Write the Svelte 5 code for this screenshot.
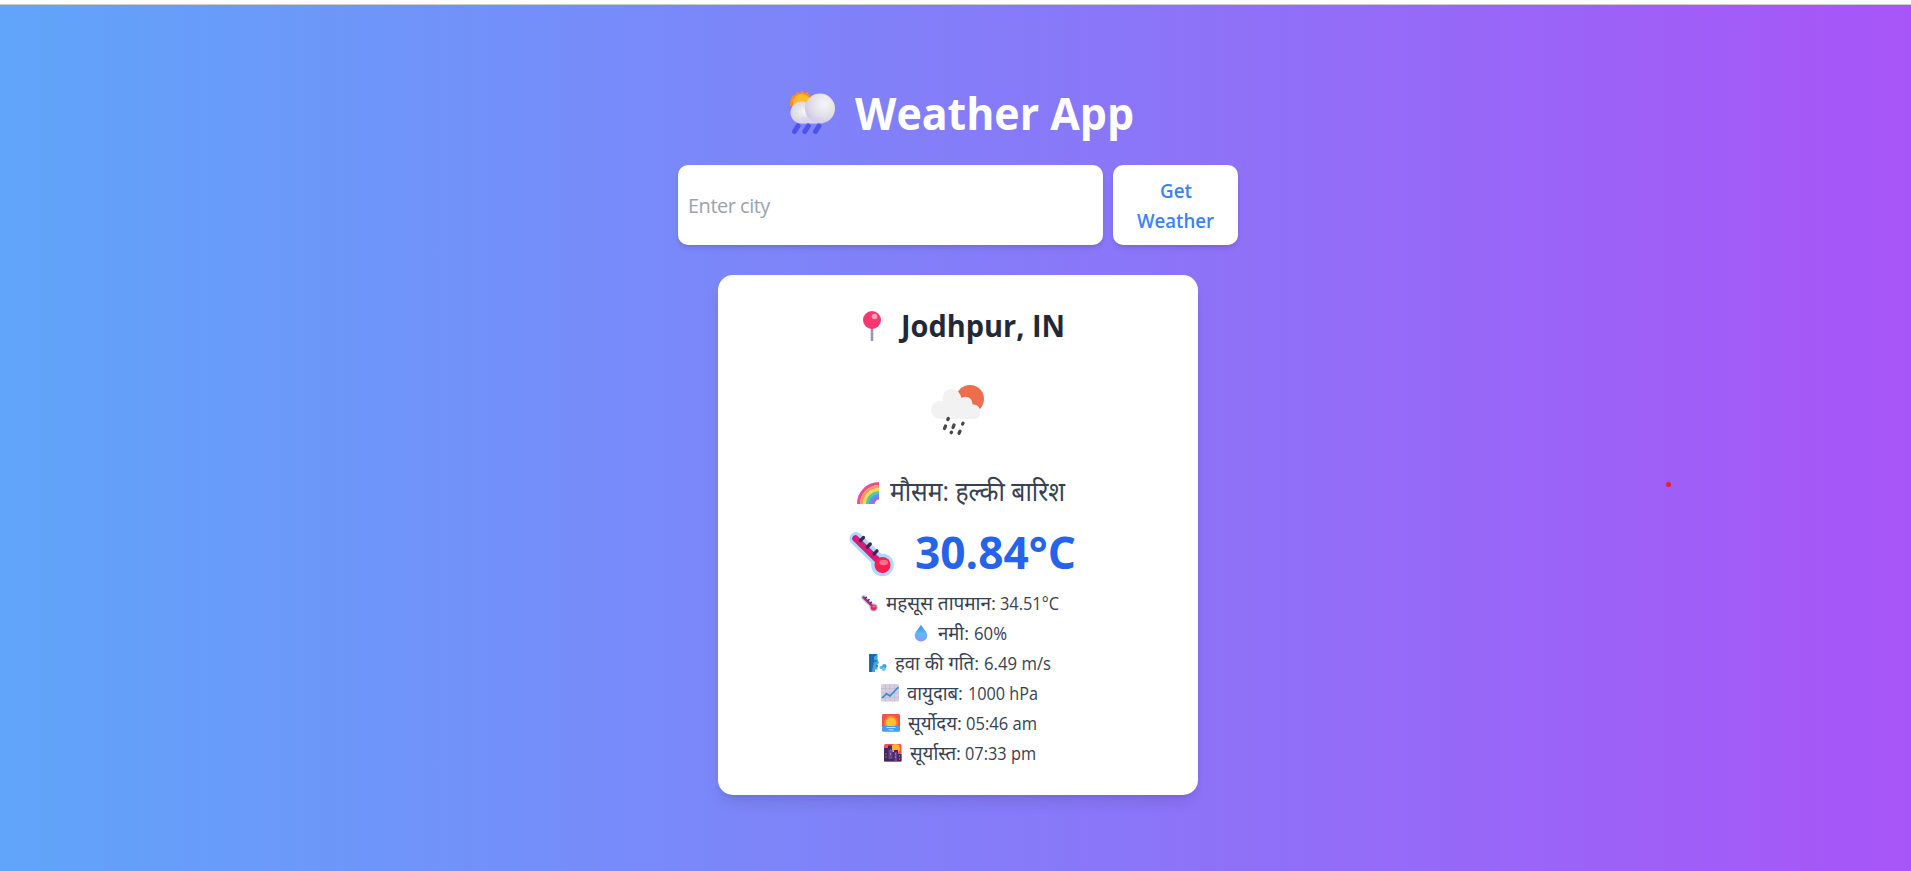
<script>
  let city = $state('');

  const details = [
    { icon: 'thermo', label: 'महसूस तापमान:', value: '34.51°C', lw: 110, vw: 59, gap: 4 },
    { icon: 'drop', label: 'नमी:', value: '60%', lw: 31, vw: 33, gap: 5 },
    { icon: 'wind', label: 'हवा की गति:', value: '6.49 m/s', lw: 84, vw: 67, gap: 5 },
    { icon: 'chart', label: 'वायुदाब:', value: '1000 hPa', lw: 56, vw: 70, gap: 5 },
    { icon: 'sunrise', label: 'सूर्योदय:', value: '05:46 am', lw: 54, vw: 71, gap: 4 },
    { icon: 'sunset', label: 'सूर्यास्त:', value: '07:33 pm', lw: 51, vw: 71, gap: 4 },
  ];

  // Condenses or widens a run of text to the given width.
  function fit(node, width) {
    const inner = node.firstElementChild;
    const natural = inner.getBoundingClientRect().width;
    node.style.width = width + 'px';
    if (natural) inner.style.transform = `scaleX(${width / natural})`;
  }
</script>

{#snippet run(text, width)}
  <span class="fit" use:fit={width}><span class="inner">{text}</span></span>
{/snippet}

{#snippet thermo(size)}
  <svg width={size} height={size} viewBox="0 0 45 45">
    <path d="M7 6.5 28 27" stroke="#add8ff" stroke-width="13" stroke-linecap="round" />
    <circle cx="33.5" cy="33" r="11.3" fill="#add8ff" />
    <path d="M6.5 6.5 30 29.5" stroke="#d51c78" stroke-width="6.5" stroke-linecap="round" />
    <circle cx="33.5" cy="33" r="8" fill="#fb1e50" />
    <ellipse cx="34.5" cy="30.5" rx="4.5" ry="2.7" fill="#ff718b" />
    <path d="m11.5 8.5 3-3M18.3 15l3-3M25 21.800l3-3" stroke="#382850" stroke-width="3.2" stroke-linecap="round" />
  </svg>
{/snippet}

<div class="page">
  <main>
    <h1>
      <span class="emoji">
        <svg width="45" height="45" viewBox="0 0 45 45">
          <defs>
            <radialGradient id="cloudA" cx=".65" cy=".35" r=".7"><stop offset="0" stop-color="#f5f5f6" /><stop offset=".6" stop-color="#e2e0e7" /><stop offset="1" stop-color="#cfc5e8" /></radialGradient>
            <radialGradient id="cloudB" cx=".5" cy=".45" r=".65"><stop offset="0" stop-color="#f7f6f8" /><stop offset=".6" stop-color="#dedce5" /><stop offset="1" stop-color="#d6c9f4" /></radialGradient>
          </defs>
          <path d="m0 11 1-3 1-3 3-1 2-3 3 1 2-2 3 2 3-1 1 3 2 1v10H0z" fill="#ff8b25" />
          <circle cx="12" cy="12" r="9" fill="#ffbd2e" />
          <path d="M11 32.500a11 11 0 1 1 5-21h13v21z" fill="url(#cloudB)" />
          <circle cx="30" cy="17.500" r="15" fill="url(#cloudA)" />
          <path d="M11 26h22v6.500H11z" fill="#dacff2" opacity=".5" />
          <path d="m8 35-3.500 5.500M18.300 35l-3.500 5.500M29 35l-3.500 5.500" stroke="#4b52ee" stroke-width="5" stroke-linecap="round" />
        </svg>
      </span>
      {@render run('Weather App', 279)}
    </h1>

    <div class="search">
      <input type="text" placeholder="Enter city" bind:value={city} />
      <button type="button">
        {@render run('Get', 32)}
        {@render run('Weather', 77)}
      </button>
    </div>

    <section class="card">
      <h2>
        <span class="emoji">
          <svg width="20" height="32" viewBox="0 0 20 32">
            <path d="M10 17v14" stroke="#a394ad" stroke-width="2.600" />
            <circle cx="10" cy="10" r="9" fill="#f7376f" />
            <circle cx="12.500" cy="6.500" r="2.800" fill="#ffa3b6" />
          </svg>
        </span>
        {@render run('Jodhpur, IN', 164)}
      </h2>

      <div class="condition">
        <svg width="100" height="80" viewBox="0 0 100 80">
          <circle cx="60" cy="29" r="14" fill="#ec6e4c" />
          <path d="M31 49a9 9 0 1 1 2-17.500C31 15 49 16 51.500 28c5-3 11 0 11 6.500 4-.5 8 2.500 8 7.500s-3.500 7-7 7z" fill="#f2f2f2" />
          <path d="m38.300 48.500-.5 1M44 55l-1 2.500M35.500 56l-1 2.500M53 53.300l-.4.700M41.500 62.200l-.3.500M50 61.300l-1 2" stroke="#484848" stroke-width="3.300" stroke-linecap="round" />
        </svg>
      </div>

      <p class="summary">
        <span class="emoji">
          <svg width="22" height="22" viewBox="0 0 22 22" fill="none" stroke-width="3.200">
            <path d="M1.600 22A20.400 20.400 0 0 1 22 1.600" stroke="#f5479d" />
            <path d="M4.600 22A17.400 17.400 0 0 1 22 4.600" stroke="#ff9b55" />
            <path d="M7.600 22A14.400 14.400 0 0 1 22 7.600" stroke="#f8da5c" />
            <path d="M10.500 22A11.500 11.500 0 0 1 22 10.500" stroke="#58cc91" />
            <path d="M13.300 22A8.700 8.700 0 0 1 22 13.300" stroke="#4b9df5" />
            <path d="M16 22a6 6 0 0 1 6-6" stroke="#a465e8" />
          </svg>
        </span>
        {@render run('मौसम: हल्की बारिश', 175)}
      </p>

      <p class="temp">
        <span class="emoji">{@render thermo(45)}</span>
        {@render run('30.84°C', 161)}
      </p>

      <ul>
        {#each details as d}
          <li>
            <span class="emoji">
              {#if d.icon === 'thermo'}
                {@render thermo(17)}
              {:else if d.icon === 'drop'}
                <svg width="18" height="18" viewBox="0 0 18 18">
                  <defs><linearGradient id="drop" x2="0" y2="1"><stop stop-color="#368ed5" /><stop offset=".55" stop-color="#62b9f8" /><stop offset="1" stop-color="#8298ff" /></linearGradient></defs>
                  <path d="M9 .5c-1 3-6.300 7-6.300 11a6.300 6 0 0 0 12.600 0c0-4-5.300-8-6.300-11z" fill="url(#drop)" />
                </svg>
              {:else if d.icon === 'wind'}
                <svg width="18" height="18" viewBox="0 0 18 18">
                  <path d="M0 0h8.500v5l1.500 4-1.500 1v5.500H6V18H0z" fill="#3ba9e7" />
                  <path d="M0 0h8.500L5 3v5l-1 4-1 6H0z" fill="#176cb0" />
                  <path d="M5 7h2.500M7 12h2" stroke="#174d83" stroke-width="1.200" />
                  <circle cx="12.300" cy="13.500" r="1.700" fill="#55bfe9" /><circle cx="15.300" cy="12.300" r="2.200" fill="#3aa6dc" /><circle cx="14.800" cy="15" r="2" fill="#69c8ef" />
                </svg>
              {:else if d.icon === 'chart'}
                <svg width="18" height="18" viewBox="0 0 18 18">
                  <rect width="18" height="17.500" rx="1.500" fill="#d6cde0" />
                  <path d="M4.500 0v17.500M9 0v17.500M13.500 0v17.500M0 4.500h18M0 9h18M0 13.500h18" stroke="#bfb4cf" stroke-width=".6" />
                  <path d="m1 14 4.500-4.200 3.500 2.200L17.500 3" fill="none" stroke="#2790d4" stroke-width="1.700" />
                </svg>
              {:else if d.icon === 'sunrise'}
                <svg width="18" height="18" viewBox="0 0 18 18">
                  <defs><clipPath id="tile"><rect width="18" height="17.500" rx="1.500" /></clipPath></defs>
                  <g clip-path="url(#tile)">
                    <path d="M0 0h18v18H0z" fill="#fa4f49" />
                    <circle cx="9" cy="8.500" r="7" fill="#ff7b39" /><circle cx="9" cy="8.500" r="5" fill="#ffc32f" />
                    <path d="M0 12h18v6H0z" fill="#429df5" />
                    <path d="M4.500 13.500h9M6.500 15.800h5" stroke="#c5e2ff" stroke-width="1" />
                  </g>
                </svg>
              {:else}
                <svg width="18" height="18" viewBox="0 0 18 18">
                  <rect width="17.500" height="17.500" rx="1.500" fill="#f65449" />
                  <circle cx="11.500" cy="4.500" r="4.500" fill="#ffb52f" />
                  <path d="M0 4h4V1.500h4V8h2V6h4v4h3.500v7.500H0z" fill="#43295f" />
                  <path d="M4.500 6h4v9h-4zM10.500 8H13v9h-2.500z" fill="#684595" />
                  <path d="M1.500 10h1M1.500 13h1M6 6h1M6 10h1M11 10h1M11 13h1M15 12h1M15 15h1" stroke="#f0ac50" stroke-width="1.100" />
                </svg>
              {/if}
            </span>
            <span class="label">{@render run(d.label, d.lw)}</span>
            <span class="value" style:margin-left="{d.gap}px">{@render run(d.value, d.vw)}</span>
          </li>
        {/each}
      </ul>
    </section>
  </main>
  <span class="dot"></span>
</div>

<style>
  :global(body) {
    margin: 0;
    background: #fff;
    overflow: hidden;
  }
  .page {
    box-sizing: border-box;
    position: relative;
    width: 100%;
    height: 867px;
    margin-top: 4px;
    padding: 83px 0 0 5px;
    border-top: 1px solid #ccc;
    background: linear-gradient(to right, #60a5fa, #a855f7);
    font-family: 'Open Sans', 'Noto Sans Devanagari', 'Noto Sans', sans-serif;
    color: #374151;
  }
  main {
    display: flex;
    flex-direction: column;
    align-items: center;
  }
  h1, h2, p, ul {
    margin: 0;
    padding: 0;
  }
  h1, h2, p, li {
    display: flex;
    justify-content: center;
    white-space: nowrap;
  }
  .fit {
    display: block;
    white-space: nowrap;
  }
  .inner {
    display: inline-block;
    transform-origin: 0 50%;
  }
  .emoji {
    display: flex;
    align-items: center;
    justify-content: center;
    flex: none;
  }
  svg {
    display: block;
    fill: none;
    overflow: visible;
  }
  h1 {
    height: 50px;
    margin-bottom: 27px;
    font-size: 45px;
    line-height: 50px;
    font-weight: 700;
    color: #fff;
  }
  h1 .emoji {
    width: 61px;
    margin-right: 12px;
    padding-top: 1px;
  }
  .search {
    display: flex;
    gap: 10px;
    width: 560px;
    height: 80px;
    margin-bottom: 30px;
  }
  input, button {
    box-sizing: border-box;
    border: 0;
    border-radius: 10px;
    background: #fff;
    box-shadow: 0 4px 6px -1px rgb(0 0 0 / 0.1), 0 2px 4px -2px rgb(0 0 0 / 0.1);
    font-family: inherit;
    font-size: 20px;
  }
  input {
    flex: 1;
    min-width: 0;
    padding: 0 10px;
    color: #1f2937;
    outline: none;
  }
  input::placeholder {
    color: #9ca3af;
    opacity: 1;
    letter-spacing: -0.5px;
  }
  button {
    display: flex;
    flex-direction: column;
    align-items: center;
    width: 125px;
    padding: 11px 0 9px;
    line-height: 30px;
    font-weight: 600;
    color: #3b82f6;
  }
  .card {
    box-sizing: border-box;
    width: 480px;
    height: 520px;
    padding-top: 31px;
    border-radius: 15px;
    background: #fff;
    box-shadow: 0 10px 15px -3px rgb(0 0 0 / 0.1), 0 4px 6px -4px rgb(0 0 0 / 0.1);
  }
  h2 {
    height: 40px;
    font-size: 30px;
    line-height: 40px;
    font-weight: 700;
    color: #1f2937;
  }
  h2 .emoji {
    width: 41px;
    margin-right: 8px;
  }
  .condition {
    display: flex;
    justify-content: center;
    height: 103px;
    padding: 24px 0 0 4px;
  }
  .summary {
    height: 35px;
    font-size: 27px;
    line-height: 35px;
  }
  .summary .emoji {
    width: 34px;
    margin-right: 5px;
    padding-top: 5px;
  }
  .temp {
    height: 50px;
    margin: 19px 0 11px;
    font-size: 45px;
    line-height: 50px;
    font-weight: 700;
    color: #2563eb;
  }
  .temp .emoji {
    width: 61px;
    margin-right: 13px;
    padding-top: 4px;
  }
  ul {
    list-style: none;
    font-size: 17.5px;
    line-height: 30px;
  }
  li {
    height: 30px;
  }
  li .emoji {
    width: 24px;
    margin-right: 5px;
  }
  .label {
    font-size: 19px;
  }
  .dot {
    position: absolute;
    left: 1666px;
    top: 477px;
    width: 5px;
    height: 5px;
    border-radius: 50%;
    background: #e8202a;
  }
</style>
